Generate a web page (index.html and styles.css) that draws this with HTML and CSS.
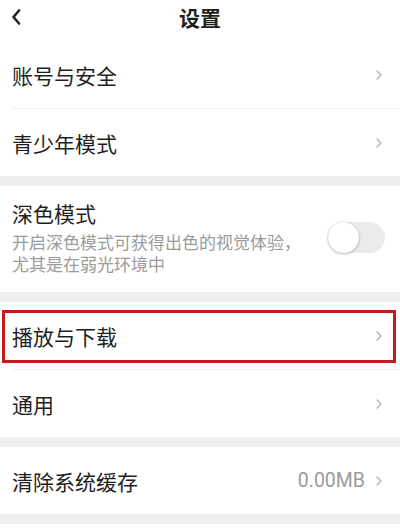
FILE: index.html
```html
<!DOCTYPE html>
<html lang="zh">
<head>
<meta charset="utf-8">
<link rel="stylesheet" href="styles.css">
</head>
<body>
<div class="page">
  <header class="header">
    <svg class="back" width="10" height="16" viewBox="0 0 10 16"><path d="M8 1.5 L2.5 8 L8 14.5" fill="none" stroke="#222" stroke-width="2.6" stroke-linecap="round" stroke-linejoin="round"/></svg>
    <div class="title">设置</div>
  </header>

  <section class="group">
    <div class="row"><span class="label">账号与安全</span><span class="right"><svg class="chev" width="6" height="10" viewBox="0 0 6 10"><path d="M1 1 L5 5 L1 9" fill="none" stroke="#b4b4b4" stroke-width="1.4" stroke-linecap="round" stroke-linejoin="round"/></svg></span></div>
    <div class="divider"></div>
    <div class="row"><span class="label">青少年模式</span><span class="right"><svg class="chev" width="6" height="10" viewBox="0 0 6 10"><path d="M1 1 L5 5 L1 9" fill="none" stroke="#b4b4b4" stroke-width="1.4" stroke-linecap="round" stroke-linejoin="round"/></svg></span></div>
  </section>

  <div class="gap"></div>

  <section class="group">
    <div class="row dark">
      <div class="dark-text">
        <div class="label">深色模式</div>
        <div class="desc-block">
          <div class="desc">开启深色模式可获得出色的视觉体验，</div>
          <div class="desc">尤其是在弱光环境中</div>
        </div>
      </div>
      <div class="toggle"><div class="knob"></div></div>
    </div>
  </section>

  <div class="gap"></div>

  <section class="group">
    <div class="row highlight"><span class="label">播放与下载</span><span class="right"><svg class="chev" width="6" height="10" viewBox="0 0 6 10"><path d="M1 1 L5 5 L1 9" fill="none" stroke="#b4b4b4" stroke-width="1.4" stroke-linecap="round" stroke-linejoin="round"/></svg></span><div class="redbox"></div></div>
    <div class="divider"></div>
    <div class="row"><span class="label">通用</span><span class="right"><svg class="chev" width="6" height="10" viewBox="0 0 6 10"><path d="M1 1 L5 5 L1 9" fill="none" stroke="#b4b4b4" stroke-width="1.4" stroke-linecap="round" stroke-linejoin="round"/></svg></span></div>
  </section>

  <div class="gap"></div>

  <section class="group">
    <div class="row"><span class="label">清除系统缓存</span><span class="right"><span class="value">0.00MB</span><svg class="chev" width="6" height="10" viewBox="0 0 6 10"><path d="M1 1 L5 5 L1 9" fill="none" stroke="#b4b4b4" stroke-width="1.4" stroke-linecap="round" stroke-linejoin="round"/></svg></span></div>
  </section>

  <div class="gap"></div>
  <section class="group tail"></section>
</div>
</body>
</html>
```
FILE: styles.css
```css
* { box-sizing: border-box; }
html, body { margin: 0; padding: 0; background: #fff; }
body {
  font-family: "Noto Sans CJK SC", "Noto Sans", "Liberation Sans", sans-serif;
  color: #1f1f1f;
  width: 400px;
  overflow: hidden;
}
.page { display: flex; flex-direction: column; }
.header {
  height: 41px;
  position: relative;
  display: flex;
  justify-content: center;
  padding-top: 3px;
}
.back { position: absolute; left: 11px; top: 9px; }
.title {
  font-size: 21px;
  font-weight: 700;
  line-height: 28px;
  color: #1f1f1f;
}
.group { background: #fff; display: flex; flex-direction: column; }
.row {
  height: 67px;
  display: flex;
  align-items: center;
  justify-content: space-between;
  padding: 0 18px 0 12px;
  position: relative;
}
.label { font-size: 21px; line-height: 28px; color: #1f1f1f; }
.right { display: flex; align-items: center; gap: 11px; }
.chev { display: block; margin-top: 1px; }
.value {
  font-family: "Roboto", "Noto Sans", sans-serif;
  font-size: 19.5px;
  color: #9a9a9a;
}
.divider { height: 1px; background: #eeeeee; margin-left: 12px; }
.gap { height: 10px; background: #efefef; }
.dark {
  height: 106px;
  align-items: flex-start;
  padding-top: 13px;
  padding-right: 15px;
}
.dark-text { display: flex; flex-direction: column; }
.desc-block { margin-top: 4px; display: flex; flex-direction: column; }
.desc {
  font-size: 17px;
  line-height: 22px;
  height: 22px;
  color: #9b9b9b;
}
.toggle {
  width: 57px;
  height: 31px;
  border-radius: 16px;
  background: #ebebeb;
  margin-top: 23px;
  position: relative;
}
.knob {
  position: absolute;
  left: 0;
  top: 0;
  width: 31px;
  height: 31px;
  border-radius: 50%;
  background: #fff;
  box-shadow: 0 1px 3px rgba(0,0,0,0.25), 0 0 0 0.5px rgba(0,0,0,0.08);
}
.highlight { height: 67px; }
.redbox {
  position: absolute;
  left: 2px;
  top: 8px;
  width: 394px;
  height: 53px;
  border: 3.5px solid #c8181c;
  pointer-events: none;
}
.tail { height: 10px; }
```
